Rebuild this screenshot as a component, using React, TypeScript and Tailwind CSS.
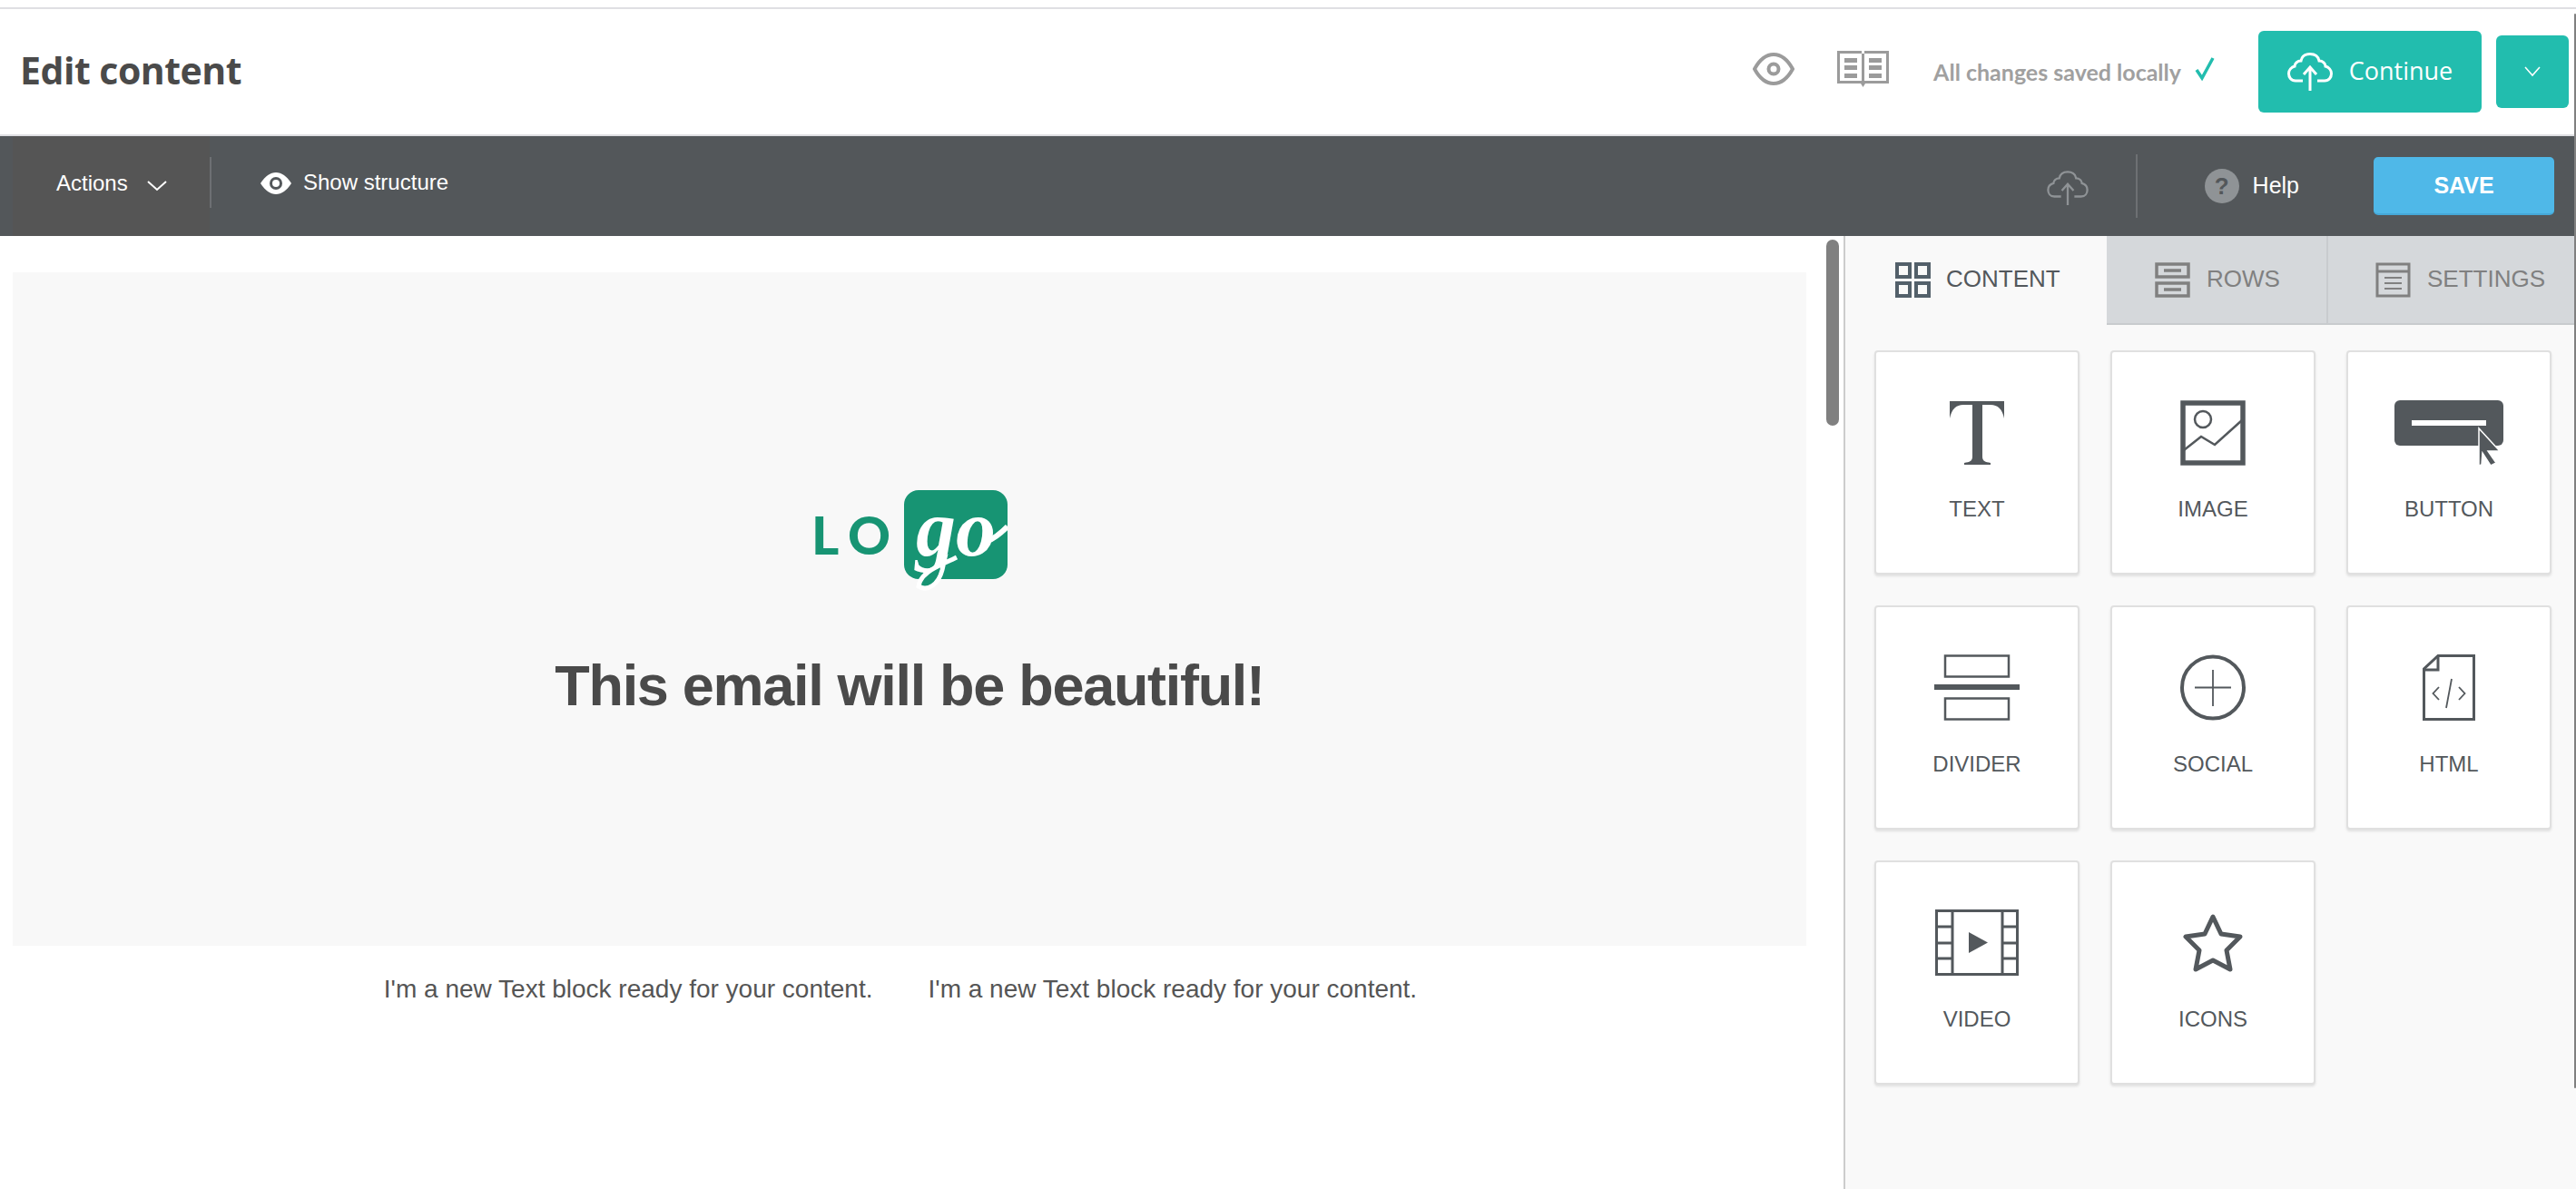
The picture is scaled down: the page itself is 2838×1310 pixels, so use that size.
const SANS = "font-['Liberation_Sans',Arial,sans-serif]";

function TextIcon() {
  return (
    <svg width="62" height="72" viewBox="0 0 62 72">
      <path d="M1 1h60v19c-2-10-7-15-15-15h-9v57c0 5 3 6 9 7v2H17v-2c6-1 9-2 9-7V5h-10C8 5 3 10 1 20z" fill="#53585c" />
    </svg>
  );
}

function ImageIcon() {
  return (
    <svg width="72" height="72" viewBox="0 0 72 72" fill="none" stroke="#53585c">
      <rect x="3" y="3" width="66" height="66" strokeWidth="5.5" />
      <ellipse cx="25" cy="21" rx="9" ry="9" strokeWidth="2.5" />
      <path d="M4 55l19-15 15 9 30-27" strokeWidth="2.5" />
    </svg>
  );
}

function ButtonIcon() {
  return (
    <svg width="120" height="72" viewBox="0 0 120 72">
      <rect x="0" y="0" width="120" height="50" rx="6" fill="#53585c" />
      <rect x="19" y="22" width="82" height="6" fill="#fff" />
      <path d="M93 31v41l3-1 1-13 9 14 6-3-9-13h13z" fill="#53585c" stroke="#fff" strokeWidth="1.5" />
    </svg>
  );
}

function DividerIcon() {
  return (
    <svg width="94" height="73" viewBox="0 0 94 73" fill="none" stroke="#53585c">
      <rect x="12" y="1.5" width="70" height="23" strokeWidth="2.5" />
      <rect x="12" y="48.5" width="70" height="23" strokeWidth="2.5" />
      <rect x="0" y="33" width="94" height="6" fill="#53585c" stroke="none" />
    </svg>
  );
}

function SocialIcon() {
  return (
    <svg width="72" height="73" viewBox="0 0 72 73" fill="none" stroke="#53585c">
      <circle cx="36" cy="36.5" r="34" strokeWidth="4" />
      <path d="M16 36.5h40M36 17v40" strokeWidth="1.8" />
    </svg>
  );
}

function HtmlIcon() {
  return (
    <svg width="58" height="73" viewBox="0 0 58 73" fill="none" stroke="#53585c">
      <path d="M1.5 71.5V16L17 1.5h39.5v70z" strokeWidth="3" />
      <path d="M2 17h15V2" strokeWidth="3" />
      <path d="M18 36l-6.5 7 6.5 7M40 36l6.500 7-6.500 7M32 27l-6 32" strokeWidth="1.8" />
    </svg>
  );
}

function VideoIcon() {
  return (
    <svg width="92" height="73" viewBox="0 0 92 73" fill="none" stroke="#53585c" strokeWidth="3">
      <rect x="1.5" y="1.5" width="89" height="70" />
      <path d="M19 2v70M74 2v70M2 19h17M2 37h17M2 54h17M74 19h17M74 37h17M74 54h17" />
      <path d="M37 25l21 11.500-21 11.500z" fill="#53585c" stroke="none" />
    </svg>
  );
}

function StarIcon() {
  return (
    <svg width="66" height="64" viewBox="0 0 66 64" fill="none" stroke="#53585c" strokeWidth="5" strokeLinejoin="round">
      <path d="M33 3l9 19 21 3-15 15 4 21-19-10-19 10 4-21L3 25l21-3z" />
    </svg>
  );
}

const BLOCKS = [
  { label: "TEXT", icon: TextIcon },
  { label: "IMAGE", icon: ImageIcon },
  { label: "BUTTON", icon: ButtonIcon },
  { label: "DIVIDER", icon: DividerIcon },
  { label: "SOCIAL", icon: SocialIcon },
  { label: "HTML", icon: HtmlIcon },
  { label: "VIDEO", icon: VideoIcon },
  { label: "ICONS", icon: StarIcon },
];

function CloudUpload({ width, color, sw = 3 }: { width: number; color: string; sw?: number }) {
  return (
    <svg width={width} height={(width * 42) / 50} viewBox="0 0 50 42" fill="none" stroke={color} strokeWidth={sw}>
      <path d="M17 31H9C4 31 1.500 27 1.500 23c0-4 3-7 6.500-8 0-3 3-6 7-6 1-5 5-7.500 10-7.500s9 2.500 10 7.500c4 0 7 3 7 6 3.500 1 6.500 4 6.500 8 0 4-2.500 8-7.500 8h-8" />
      <path d="M25 42V16M18 24l7-8 7 8" />
    </svg>
  );
}

function Logo() {
  return (
    <div className="flex items-center h-[110px]">
      <span className="font-['Lato',sans-serif] font-black text-[58px] leading-none tracking-[11px] text-[#179473]">LO</span>
      <div className="relative ml-[4px] w-[114px] h-[98px] rounded-[16px] bg-[#179473]">
        <span className="absolute left-[13px] top-[-1px] font-['Liberation_Serif',serif] italic font-bold text-[88px] leading-none text-white">go</span>
        <svg className="absolute left-0 top-0" width="114" height="112" viewBox="0 0 114 112" fill="none">
          <path d="M92 56c8-3 15-9 22-16" stroke="#fff" strokeWidth="6" />
          <path d="M58 74C38 84 18 90 16 106c10 6 22-2 26-18l4-18" stroke="#fff" strokeWidth="5" fill="#179473" />
        </svg>
      </div>
    </div>
  );
}

export default function App() {
  return (
    <div className={`${SANS} relative w-[2838px] h-[1310px] overflow-hidden bg-white flex flex-col`}>
      <div className="h-[8px] shrink-0" />
      <header className="h-[142px] shrink-0 border-t-2 border-b-2 border-[#dfdfe3] flex items-center pl-[22px] pr-[8px]">
        <h1 className="font-['Open_Sans',sans-serif] font-bold text-[41px] tracking-[-0.5px] text-[#4a4a4a] leading-none -mt-[4px]">Edit content</h1>
        <div className="ml-auto flex items-center">
          <svg width="46" height="36" viewBox="0 0 46 36" fill="none" stroke="#9b9b9b" className="-mt-[6px]">
            <path d="M2 18C8 7 15 2 23 2s15 5 21 16c-6 11-13 16-21 16S8 29 2 18z" strokeWidth="4" />
            <circle cx="23" cy="18" r="5.5" strokeWidth="4" />
          </svg>
          <svg width="57" height="40" viewBox="0 0 57 40" className="ml-[47px] -mt-[6px]" fill="#9b9b9b">
            <path d="M0 0h27v3h3V0h27v36H31l-2.500 4L26 36H0zM3 3v30h24V3zm27 0v30h24V3z" />
            <path d="M8 8h14v5H8zM8 16h14v5H8zM8 25h14v5H8zM35 8h14v5H35zM35 16h14v5H35zM35 25h14v5H35z" />
          </svg>
          <span className="ml-[49px] font-['Lato',sans-serif] font-bold text-[25px] text-[#a0a0a0] leading-none">All changes saved locally</span>
          <svg width="24" height="26" viewBox="0 0 24 26" fill="none" stroke="#22bdae" strokeWidth="3.500" className="ml-[14px] -mt-[6px]">
            <path d="M3 14l6 9L21 1" />
          </svg>
          <button className="ml-[47px] w-[246px] h-[90px] rounded-[6px] bg-[#22bdae] flex items-center justify-center gap-[18px] text-white font-['Open_Sans',sans-serif] text-[27px]">
            <CloudUpload width={50} color="#ffffff" />
            <span className="-mt-[2px]">Continue</span>
          </button>
          <button className="ml-[16px] w-[80px] h-[80px] rounded-[6px] bg-[#22bdae] flex items-center justify-center">
            <svg width="18" height="12" viewBox="0 0 18 12" fill="none" stroke="#fff" strokeWidth="1.500">
              <path d="M1 1l8 9 8-9" />
            </svg>
          </button>
        </div>
      </header>

      <div className="h-[110px] shrink-0 bg-[#53575a] flex items-center text-white">
        <div className="h-full bg-[#555555] ml-[14px] pl-[48px] flex items-center w-[217px]">
          <span className="text-[24px] leading-none -mt-[6px]">Actions</span>
          <svg width="22" height="12" viewBox="0 0 22 12" fill="none" stroke="#fff" strokeWidth="2" className="ml-[21px]">
            <path d="M1 1l10 9 10-9" />
          </svg>
        </div>
        <div className="w-[2px] h-[56px] bg-[#6d7073] -mt-[8px]" />
        <svg width="34" height="24" viewBox="0 0 34 24" className="ml-[54px] -mt-[6px]">
          <path d="M0 12C5 4 11 0 17 0s12 4 17 12c-5 8-11 12-17 12S5 20 0 12z" fill="#fff" />
          <circle cx="17" cy="12" r="7" fill="#53575a" />
          <circle cx="17" cy="12" r="4" fill="#fff" />
        </svg>
        <span className="ml-[13px] text-[24px] leading-none -mt-[8px]">Show structure</span>
        <div className="ml-auto flex items-center">
          <div className="mt-[4px]">
            <CloudUpload width={46} color="#8f9396" sw={2.5} />
          </div>
          <div className="ml-[52px] w-[2px] h-[70px] bg-[#6d7073]" />
          <div className="ml-[74px] w-[38px] h-[38px] rounded-full bg-[#8f9396] flex items-center justify-center text-[#53575a] font-bold text-[26px] leading-none">?</div>
          <span className="ml-[15px] text-[25px] leading-none -mt-[2px]">Help</span>
          <button className="ml-[82px] mr-[24px] w-[199px] h-[64px] rounded-[5px] bg-[#4fb8e8] border-b-2 border-[#45a8d8] font-bold text-[25px] leading-none">SAVE</button>
        </div>
      </div>

      <div className="flex flex-1 min-h-0">
        <main className="relative w-[2031px] shrink-0 pl-[14px] pr-[41px] pt-[40px]">
          <div className="h-[742px] bg-[#f8f8f8] flex flex-col items-center pt-[234px]">
            <Logo />
            <h2 className="mt-[80px] font-bold text-[63px] tracking-[-1.3px] leading-none text-[#4a4a4a]">This email will be beautiful!</h2>
          </div>
          <div className="flex justify-center gap-[61px] pr-[20px] mt-[32px] text-[28px] leading-[32px] text-[#555555]">
            <p>I'm a new Text block ready for your content.</p>
            <p>I'm a new Text block ready for your content.</p>
          </div>
          <div className="absolute left-[2012px] top-[4px] w-[14px] h-[205px] rounded-full bg-[#808080]" />
        </main>

        <aside className="flex-1 border-l-2 border-[#cccccc] bg-[#f9f9f9] flex flex-col min-w-0">
          <div className="flex h-[98px] shrink-0 text-[26px] leading-none">
            <div className="w-[288px] flex items-center gap-[17px] pl-[55px] pb-[2px] text-[#53585c]">
              <svg width="39" height="39" viewBox="0 0 39 39" fill="none" stroke="#53606a" strokeWidth="4">
                <path d="M2 2h14v14H2zM23 2h14v14H23zM2 23h14v14H2zM23 23h14v14H23z" />
              </svg>
              <span className="-mt-[2px]">CONTENT</span>
            </div>
            <div className="w-[242px] border-b-2 border-[#c8cbce] bg-[#d5d8db] flex items-center gap-[18px] pl-[53px] text-[#808080]">
              <svg width="39" height="39" viewBox="0 0 39 39" fill="none" stroke="#808080" strokeWidth="3.500">
                <path d="M2 2h35v14H2zM2 23h35v14H2z" />
                <path d="M10 9h19M10 30h19" />
              </svg>
              <span className="-mt-[2px]">ROWS</span>
            </div>
            <div className="flex-1 border-b-2 border-l-2 border-[#c8cbce] bg-[#d5d8db] flex items-center gap-[18px] pl-[52px] text-[#808080]">
              <svg width="39" height="39" viewBox="0 0 39 39" fill="none" stroke="#808080" strokeWidth="3">
                <path d="M2 2h35v35H2zM2 10h35" />
                <path d="M10 17h19M10 23h19M10 29h19" strokeWidth="2" />
              </svg>
              <span className="-mt-[2px]">SETTINGS</span>
            </div>
          </div>
          <div className="grid grid-cols-[226px_226px_226px] gap-x-[34px] gap-y-[34px] pl-[32px] pt-[28px]">
            {BLOCKS.map(({ label, icon: Icon }) => (
              <div key={label} className="h-[247px] rounded-[4px] bg-white border-2 border-[#e0e0e0] shadow-[0_2px_3px_rgba(0,0,0,0.1)] flex flex-col items-center pt-[52px]">
                <div className="h-[73px] flex items-center justify-center">
                  <Icon />
                </div>
                <span className="mt-[36px] text-[24px] leading-none text-[#53585c]">{label}</span>
              </div>
            ))}
          </div>
        </aside>
      </div>
      <div className="absolute right-0 top-[15px] h-[1184px] w-[2px] rounded-full bg-[#808080]" />
    </div>
  );
}
